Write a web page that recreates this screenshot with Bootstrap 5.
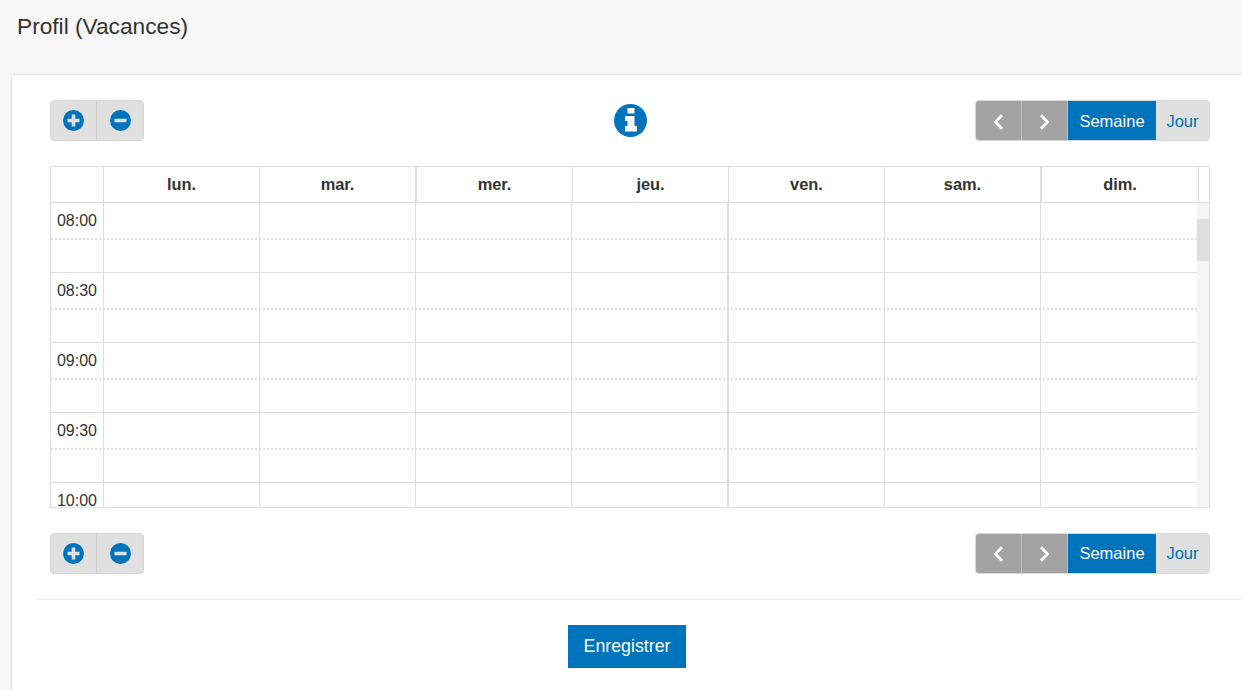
<!DOCTYPE html>
<html lang="fr">
<head>
<meta charset="utf-8">
<title>Profil (Vacances)</title>
<link href="https://cdn.jsdelivr.net/npm/bootstrap@5.3.0/dist/css/bootstrap.min.css" rel="stylesheet">
<style>
html,body{height:690px;overflow:hidden}
body{background:#f7f7f7;font-family:"Liberation Sans",Arial,sans-serif;color:#333;font-size:16px}
.page-head{height:74px;padding:12px 0 0 17px}
.page-title{font-size:22.7px;line-height:28px;font-weight:400;margin:0;color:#333}
.panel-box{margin-left:11px;background:#fff;border-left:1px solid #e3e3e3;border-top:1px solid #e3e3e3;height:616px}
.panel-inner{padding:25px 32px 0 38px}
.tool-row{height:41px}
.tool-top{display:grid;grid-template-columns:1fr auto 1fr;align-items:center}
.tool-top .tool-group:first-child{justify-self:start}
.tool-top .tool-group:last-child{justify-self:end}
.tool-low{margin-top:25px}
.tool-group{display:flex;height:41px;border-radius:4px;overflow:hidden;border:1px solid #d6d6d6;background:#e0e0e0}
.tool-btn{width:46px;border:0;padding:0;background:#e0e0e0;display:flex;align-items:center;justify-content:center;border-right:1px solid #cfcfcf}
.tool-btn:last-child{border-right:0}
.nav-dark{background:#a3a3a3;border-right:1px solid #bdbdbd}
.nav-group{border-color:#d9d9d9}
.view-on{background:#0073bd;color:#fff;border:0;width:88px;font-size:16.5px;margin:-1px 0;padding:0}
.view-off{background:#e0e0e0;color:#0073bd;border:0;width:53px;font-size:16.5px;padding:0}
.tool-top .view-on,.tool-top .view-off,.tool-top .nav-dark{padding-top:2px}
.cal-box{margin-top:25px;height:342px;border:1px solid #dedede;background:#fff;overflow:hidden}
.cal-head{display:grid;grid-template-columns:53px 156px 157px 156px 156px 156px 157px 157px 10px;height:36px;border-bottom:1px solid #dedede}
.cal-head>div{border-right:1px solid #dedede;text-align:center;font-weight:700;font-size:16.4px;line-height:35px;color:#333}
.cal-head>div:last-child{border-right:0}
.cal-head>.edge-wide{border-right-width:2px}
.cal-scroll{height:304px;overflow:hidden;position:relative}
.cal-row{display:grid;grid-template-columns:53px 156px 156px 156px 157px 156px 156px 157px;height:70px;border-bottom:1px solid #dedede;position:relative}
.cal-row>div{border-right:1px solid #dedede}
.cal-row>div:last-child{border-right:0}
.cal-row>.edge-wide{border-right-width:2px}
.cal-row::after{content:"";position:absolute;left:0;right:0;top:35px;border-top:2px dotted #e0e0e0}
.cal-time{text-align:center;font-size:16px;line-height:20px;padding-top:8px;color:#333}
.cal-track{position:absolute;top:0;right:0;bottom:0;width:12px;background:#f5f5f5}
.cal-thumb{position:absolute;top:16px;left:0;width:12px;height:42px;background:#dedede}
.divider-line{margin:25px 0 0 25px;height:1px;background:#ececec}
.save-btn{background:#0073bd;color:#fff;border:0;border-radius:0;width:118px;height:43px;font-size:17.8px;padding:0;display:block;margin:25px 0 0 556px}
</style>
</head>
<body>
<div class="page-head"><h1 class="page-title">Profil (Vacances)</h1></div>
<div class="panel-box">
 <div class="panel-inner">
  <div class="tool-row tool-top">
   <div class="tool-group">
    <button class="tool-btn" type="button"><svg width="21" height="21" viewBox="0 0 21 21"><circle cx="10.5" cy="10.5" r="10.5" fill="#0073bd"/><path d="M8.7 4.5h3.6v4.200h4.200v3.600h-4.200v4.200H8.700v-4.200H4.500V8.700h4.200z" fill="#e0e0e0"/></svg></button>
    <button class="tool-btn" type="button"><svg width="21" height="21" viewBox="0 0 21 21"><circle cx="10.5" cy="10.500" r="10.500" fill="#0073bd"/><rect x="4.500" y="8.700" width="12" height="3.600" rx=".6" fill="#e0e0e0"/></svg></button>
   </div>
   <svg width="33" height="33" viewBox="0 0 33 33"><circle cx="16.5" cy="16.5" r="16.5" fill="#0073bd"/><path d="M13.500 4h7v5.500h-7zM11 12h9.500v10H23v5.500H11V22h2.500v-5H11z" fill="#fff"/></svg>
   <div class="tool-group nav-group">
    <button class="tool-btn nav-dark" type="button"><svg width="11" height="16" viewBox="0 0 11 16"><path d="M9 1.200 2.500 8 9 14.800" fill="none" stroke="#fff" stroke-width="2.800"/></svg></button>
    <button class="tool-btn nav-dark" type="button"><svg width="11" height="16" viewBox="0 0 11 16"><path d="M2 1.200 8.500 8 2 14.800" fill="none" stroke="#fff" stroke-width="2.800"/></svg></button>
    <button class="view-on" type="button">Semaine</button>
    <button class="view-off" type="button">Jour</button>
   </div>
  </div>
  <div class="cal-box">
   <div class="cal-head"><div></div><div>lun.</div><div class="edge-wide">mar.</div><div>mer.</div><div>jeu.</div><div>ven.</div><div class="edge-wide">sam.</div><div>dim.</div><div></div></div>
   <div class="cal-scroll">
    <div class="cal-row"><div class="cal-time">08:00</div><div></div><div></div><div></div><div class="edge-wide"></div><div></div><div></div><div></div></div>
    <div class="cal-row"><div class="cal-time">08:30</div><div></div><div></div><div></div><div class="edge-wide"></div><div></div><div></div><div></div></div>
    <div class="cal-row"><div class="cal-time">09:00</div><div></div><div></div><div></div><div class="edge-wide"></div><div></div><div></div><div></div></div>
    <div class="cal-row"><div class="cal-time">09:30</div><div></div><div></div><div></div><div class="edge-wide"></div><div></div><div></div><div></div></div>
    <div class="cal-row"><div class="cal-time">10:00</div><div></div><div></div><div></div><div class="edge-wide"></div><div></div><div></div><div></div></div>
    <div class="cal-track"><div class="cal-thumb"></div></div>
   </div>
  </div>
  <div class="tool-row tool-low d-flex justify-content-between align-items-center">
   <div class="tool-group">
    <button class="tool-btn" type="button"><svg width="21" height="21" viewBox="0 0 21 21"><circle cx="10.5" cy="10.5" r="10.5" fill="#0073bd"/><path d="M8.7 4.5h3.6v4.200h4.200v3.600h-4.200v4.200H8.700v-4.200H4.500V8.700h4.200z" fill="#e0e0e0"/></svg></button>
    <button class="tool-btn" type="button"><svg width="21" height="21" viewBox="0 0 21 21"><circle cx="10.5" cy="10.500" r="10.500" fill="#0073bd"/><rect x="4.500" y="8.700" width="12" height="3.600" rx=".6" fill="#e0e0e0"/></svg></button>
   </div>
   <div class="tool-group nav-group">
    <button class="tool-btn nav-dark" type="button"><svg width="11" height="16" viewBox="0 0 11 16"><path d="M9 1.200 2.500 8 9 14.800" fill="none" stroke="#fff" stroke-width="2.800"/></svg></button>
    <button class="tool-btn nav-dark" type="button"><svg width="11" height="16" viewBox="0 0 11 16"><path d="M2 1.200 8.500 8 2 14.800" fill="none" stroke="#fff" stroke-width="2.800"/></svg></button>
    <button class="view-on" type="button">Semaine</button>
    <button class="view-off" type="button">Jour</button>
   </div>
  </div>
 </div>
 <div class="divider-line"></div>
 <button class="save-btn" type="button">Enregistrer</button>
</div>
</body>
</html>
